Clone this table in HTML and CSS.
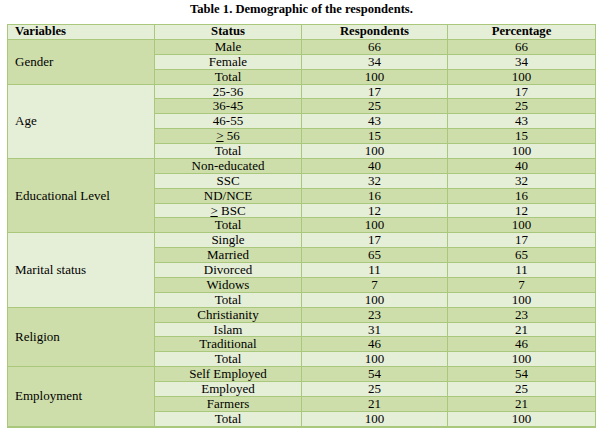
FILE: index.html
```html
<!DOCTYPE html>
<html>
<head>
<meta charset="utf-8">
<link rel="stylesheet" href="styles.css">
</head>
<body>
<div class="page">
  <div class="title">Table 1. Demographic of the respondents.</div>
  <table class="demo">
    <colgroup><col class="c1"><col class="c2"><col class="c3"><col class="c4"></colgroup>
    <thead>
      <tr class="lt"><th class="var">Variables</th><th>Status</th><th>Respondents</th><th>Percentage</th></tr>
    </thead>
    <tbody>
      <tr class="dk"><td class="var dk" rowspan="3">Gender</td><td>Male</td><td>66</td><td>66</td></tr>
      <tr class="lt"><td>Female</td><td>34</td><td>34</td></tr>
      <tr class="dk"><td>Total</td><td>100</td><td>100</td></tr>

      <tr class="lt"><td class="var lt" rowspan="5">Age</td><td>25-36</td><td>17</td><td>17</td></tr>
      <tr class="dk"><td>36-45</td><td>25</td><td>25</td></tr>
      <tr class="lt"><td>46-55</td><td>43</td><td>43</td></tr>
      <tr class="dk"><td><u>&gt;</u> 56</td><td>15</td><td>15</td></tr>
      <tr class="lt"><td>Total</td><td>100</td><td>100</td></tr>

      <tr class="dk"><td class="var dk" rowspan="5">Educational Level</td><td>Non-educated</td><td>40</td><td>40</td></tr>
      <tr class="lt"><td>SSC</td><td>32</td><td>32</td></tr>
      <tr class="dk"><td>ND/NCE</td><td>16</td><td>16</td></tr>
      <tr class="lt"><td><u>&gt;</u> BSC</td><td>12</td><td>12</td></tr>
      <tr class="dk"><td>Total</td><td>100</td><td>100</td></tr>

      <tr class="lt"><td class="var lt" rowspan="5">Marital status</td><td>Single</td><td>17</td><td>17</td></tr>
      <tr class="dk"><td>Married</td><td>65</td><td>65</td></tr>
      <tr class="lt"><td>Divorced</td><td>11</td><td>11</td></tr>
      <tr class="dk"><td>Widows</td><td>7</td><td>7</td></tr>
      <tr class="lt"><td>Total</td><td>100</td><td>100</td></tr>

      <tr class="dk"><td class="var dk" rowspan="4">Religion</td><td>Christianity</td><td>23</td><td>23</td></tr>
      <tr class="lt"><td>Islam</td><td>31</td><td>21</td></tr>
      <tr class="dk"><td>Traditional</td><td>46</td><td>46</td></tr>
      <tr class="lt"><td>Total</td><td>100</td><td>100</td></tr>

      <tr class="dk"><td class="var dk" rowspan="4">Employment</td><td>Self Employed</td><td>54</td><td>54</td></tr>
      <tr class="lt"><td>Employed</td><td>25</td><td>25</td></tr>
      <tr class="dk"><td>Farmers</td><td>21</td><td>21</td></tr>
      <tr class="lt"><td>Total</td><td>100</td><td>100</td></tr>
    </tbody>
  </table>
</div>
</body>
</html>
```

FILE: styles.css
```css
html, body {
  margin: 0;
  padding: 0;
  background: #ffffff;
}
body {
  font-family: "Liberation Serif", "Times New Roman", serif;
  color: #000000;
}
.page {
  padding: 2px 0 0 7px;
  width: 589px;
}
.title {
  font-weight: bold;
  font-size: 12.6px;
  line-height: 15px;
  text-align: center;
  margin-bottom: 7px;
}
.demo {
  width: 589px;
  border-collapse: collapse;
  table-layout: fixed;
  border: 1px solid #a9c87b;
  border-bottom: 2px solid #a9c87b;
}
.c1 { width: 147px; }
.c2 { width: 147px; }
.c3 { width: 146px; }
.c4 { width: 148px; }
.demo th,
.demo td {
  border: 1px solid #a9c87b;
  padding: 0;
  height: 13.88px;
  line-height: 13.88px;
  font-size: 13px;
  text-align: center;
  white-space: nowrap;
  overflow: hidden;
}
.demo th {
  font-weight: bold;
  font-size: 12.7px;
}
.demo .var {
  text-align: left;
  padding-left: 7px;
}
.lt { background: #e5eed7; }
.dk { background: #cedeab; }
.demo u {
  text-decoration: underline;
  text-underline-offset: 1px;
}
```
